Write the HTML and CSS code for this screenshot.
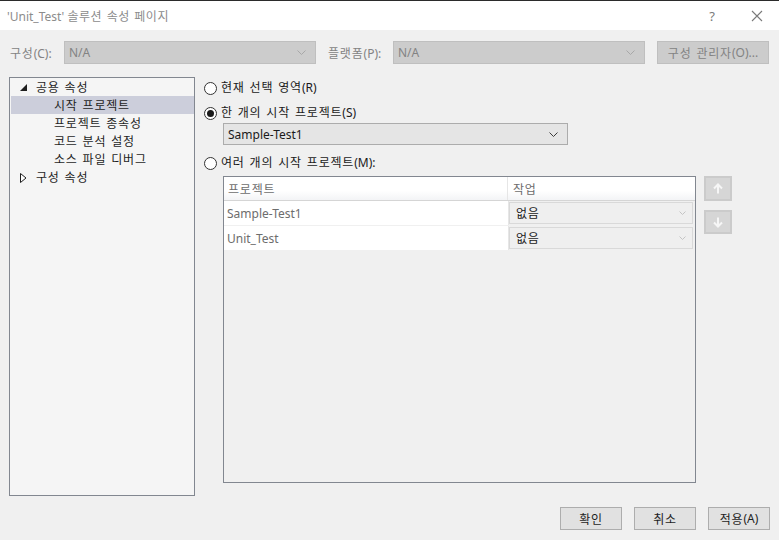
FILE: index.html
```html
<html lang="ko">

<head>
    <meta charset="UTF-8">
    <title>'Unit_Test' 솔루션 속성 페이지</title>
    <link rel="stylesheet" href="styles.css">
</head>

<body>

    <div class="titlebar">
        <span class="title">'Unit_Test' <span class="ko">솔루션 속성 페이지</span></span>
        <span class="help">?</span>
        <span class="close">
            <svg width="12" height="12" viewBox="0 0 12 12"><path d="M1 1 L11 11 M11 1 L1 11" stroke="#7a7a7a" stroke-width="1.1" fill="none"/></svg>
        </span>
    </div>

    <div class="config">
        <span class="label cfg-label"><span class="ko">구성</span>(C):</span>
        <div class="combo disabled">
            <span>N/A</span>
            <svg class="chev" width="9" height="5" viewBox="0 0 9 5"><path d="M0.5 0.5 L4.5 4.5 L8.5 0.5" stroke="#a8a8a8" fill="none"/></svg>
        </div>
        <span class="label plat-label"><span class="ko">플랫폼</span>(P):</span>
        <div class="combo disabled">
            <span>N/A</span>
            <svg class="chev" width="9" height="5" viewBox="0 0 9 5"><path d="M0.5 0.5 L4.5 4.5 L8.5 0.5" stroke="#a8a8a8" fill="none"/></svg>
        </div>
        <div class="btn disabled mgr"><span class="ko">구성 관리자</span>(O)...</div>
    </div>

    <div class="main">
        <div class="tree">
            <div class="node">
                <svg class="tri" width="7" height="7" viewBox="0 0 7 7"><path d="M7 0 L7 7 L0 7 Z" fill="#1e1e1e"/></svg>
                <span class="ko">공용 속성</span>
            </div>
            <div class="node child selected ko">시작 프로젝트</div>
            <div class="node child ko">프로젝트 종속성</div>
            <div class="node child ko">코드 분석 설정</div>
            <div class="node child ko">소스 파일 디버그</div>
            <div class="node">
                <svg class="tri" width="7" height="10" viewBox="0 0 7 10"><path d="M0.5 0.5 L6 5 L0.5 9.5 Z" stroke="#1e1e1e" fill="#fff"/></svg>
                <span class="ko">구성 속성</span>
            </div>
        </div>

        <div class="panel">
            <div class="option first">
                <span class="radio"></span>
                <span><span class="ko">현재 선택 영역</span>(R)</span>
            </div>
            <div class="option second">
                <span class="radio checked"></span>
                <span><span class="ko">한 개의 시작 프로젝트</span>(S)</span>
            </div>
            <div class="combo project">
                <span>Sample-Test1</span>
                <svg class="chev" width="9" height="5" viewBox="0 0 9 5"><path d="M0.5 0.5 L4.5 4.5 L8.5 0.5" stroke="#3c3c3c" fill="none"/></svg>
            </div>
            <div class="option third">
                <span class="radio"></span>
                <span><span class="ko">여러 개의 시작 프로젝트</span>(M):</span>
            </div>

            <div class="grid-wrap">
                <div class="grid">
                    <div class="grid-head">
                        <div class="cell col1 ko">프로젝트</div>
                        <div class="cell col2 ko">작업</div>
                    </div>
                    <div class="grid-row">
                        <div class="cell col1">Sample-Test1</div>
                        <div class="cell col2">
                            <div class="action">
                                <span class="ko">없음</span>
                                <svg class="chev" width="7" height="4" viewBox="0 0 7 4"><path d="M0.5 0.5 L3.5 3.5 L6.5 0.5" stroke="#c4c4c4" fill="none"/></svg>
                            </div>
                        </div>
                    </div>
                    <div class="grid-row">
                        <div class="cell col1">Unit_Test</div>
                        <div class="cell col2">
                            <div class="action">
                                <span class="ko">없음</span>
                                <svg class="chev" width="7" height="4" viewBox="0 0 7 4"><path d="M0.5 0.5 L3.5 3.5 L6.5 0.5" stroke="#c4c4c4" fill="none"/></svg>
                            </div>
                        </div>
                    </div>
                </div>

                <div class="movers">
                    <div class="mover">
                        <svg width="10" height="11" viewBox="0 0 10 11"><path d="M5 10.5 L5 1.5 M1 5.5 L5 1.5 L9 5.5" stroke="#f6f6f6" stroke-width="2" fill="none"/></svg>
                    </div>
                    <div class="mover down">
                        <svg width="10" height="11" viewBox="0 0 10 11"><path d="M5 0.5 L5 9.5 M1 5.5 L5 9.5 L9 5.5" stroke="#f6f6f6" stroke-width="2" fill="none"/></svg>
                    </div>
                </div>
            </div>
        </div>
    </div>

    <div class="footer">
        <div class="btn"><span class="ko">확인</span></div>
        <div class="btn"><span class="ko">취소</span></div>
        <div class="btn"><span class="ko">적용</span>(A)</div>
    </div>

</body>

</html>
```

FILE: styles.css
```css
body {
    margin: 0px;
    padding: 0px;
    width: 779px;
    height: 540px;
    overflow: hidden;
    background: #f0f0f0;
    font-family: "Noto Sans", "Noto Sans CJK KR", sans-serif;
    font-size: 12px;
    color: #1e1e1e;
}
/* hangul runs a bit wider, like the system font */
.ko {
    letter-spacing: 0.8px;
    word-spacing: 1px;
}
.titlebar {
    height: 29px;
    border-top: 1px solid #2b2b2b;
    background: #ffffff;
    display: flex;
    align-items: center;
    padding-left: 7px;
    color: #8c8c8c;
    font-size: 12px;
}
.title {
    flex: 1;
}
.title .ko {
    letter-spacing: 0.5px;
}
.help {
    width: 14px;
    text-align: center;
    color: #7a7a7a;
    font-size: 13px;
    margin-right: 31px;
}
.close {
    width: 14px;
    margin-right: 15px;
    display: flex;
    justify-content: center;
}
.config {
    display: flex;
    align-items: center;
    padding: 11px 10px 0px 10px;
    height: 23px;
}
.label {
    color: #838383;
}
.cfg-label {
    width: 54px;
}
.plat-label {
    width: 65px;
    margin-left: 12px;
}
.combo {
    box-sizing: border-box;
    width: 252px;
    height: 23px;
    display: flex;
    align-items: center;
    justify-content: space-between;
    padding: 0px 9px 0px 4px;
    border: 1px solid #bfbfbf;
}
.combo.disabled {
    background: #cccccc;
    color: #838383;
}
.btn {
    box-sizing: border-box;
    width: 62px;
    height: 23px;
    border: 1px solid #adadad;
    background: #e1e1e1;
    display: flex;
    align-items: center;
    justify-content: center;
    color: #1e1e1e;
}
.btn.disabled {
    background: #cccccc;
    border-color: #bfbfbf;
    color: #838383;
}
.mgr {
    width: 112px;
    margin-left: 12px;
}
.main {
    display: flex;
    margin-top: 13px;
    padding-left: 9px;
    height: 419px;
}
.tree {
    box-sizing: border-box;
    width: 186px;
    height: 419px;
    border: 1px solid #828790;
    background: #f5f5f5;
    padding: 0px 0px 0px 1px;
}
.node {
    box-sizing: border-box;
    height: 18px;
    display: flex;
    align-items: center;
    padding-left: 9px;
    padding-top: 1px;
    line-height: 17px;
}
.node .tri {
    margin-right: 9px;
}
.node.child {
    padding-left: 43px;
}
.selected {
    background: #cccedb;
}
.panel {
    margin-left: 9px;
}
.option {
    height: 18px;
    display: flex;
    align-items: center;
    line-height: 18px;
    color: #1a1a1a;
}
.first {
    margin-top: 2px;
}
.second {
    margin-top: 7px;
}
.third {
    margin-top: 9px;
}
.radio {
    box-sizing: border-box;
    width: 13px;
    height: 13px;
    border-radius: 50%;
    border: 1px solid #333333;
    background: #ffffff;
    margin-right: 4px;
    display: flex;
    align-items: center;
    justify-content: center;
}
.radio.checked::after {
    content: "";
    width: 7px;
    height: 7px;
    border-radius: 50%;
    background: #1a1a1a;
}
.combo.project {
    width: 345px;
    height: 22px;
    margin: 1px 0px 0px 19px;
    background: #e5e5e5;
    border-color: #acacac;
    color: #1a1a1a;
}
.grid-wrap {
    display: flex;
    margin: 4px 0px 0px 19px;
}
.grid {
    box-sizing: border-box;
    width: 473px;
    height: 307px;
    border: 1px solid #828790;
    background: #f0f0f0;
}
.grid-head {
    display: flex;
    height: 23px;
    background: linear-gradient(#ffffff 60%, #f3f4f6);
    border-bottom: 1px solid #d5d5d5;
    color: #6d6d6d;
}
.grid-head .col1 {
    border-right: 1px solid #e6e6e6;
    padding-left: 4px;
}
.grid-row {
    display: flex;
    height: 24px;
    border-bottom: 1px solid #f0f0f0;
    background: #ffffff;
}
.cell {
    box-sizing: border-box;
    display: flex;
    align-items: center;
}
.col1 {
    width: 284px;
    padding-left: 3px;
    color: #6d6d6d;
}
.grid-head .col2 {
    padding-left: 5px;
}
.col2 {
    flex: 1;
}
.grid-row .col2 {
    border-left: 1px solid #e6e6e6;
    padding: 1px 2px 1px 0px;
    background: #f0f0f0;
}
.action {
    box-sizing: border-box;
    width: 100%;
    height: 22px;
    background: #efefef;
    border: 1px solid #d9d9d9;
    display: flex;
    align-items: center;
    justify-content: space-between;
    padding: 0px 6px 0px 6px;
    color: #1a1a1a;
}
.movers {
    margin-left: 8px;
}
.mover {
    box-sizing: border-box;
    width: 28px;
    height: 25px;
    background: #d6d6d6;
    border: 2px solid #cbcbcb;
    display: flex;
    align-items: center;
    justify-content: center;
}
.mover.down {
    margin-top: 9px;
    height: 24px;
}
.footer {
    display: flex;
    justify-content: flex-end;
    gap: 12px;
    margin-top: 11px;
    padding-right: 9px;
}
```
